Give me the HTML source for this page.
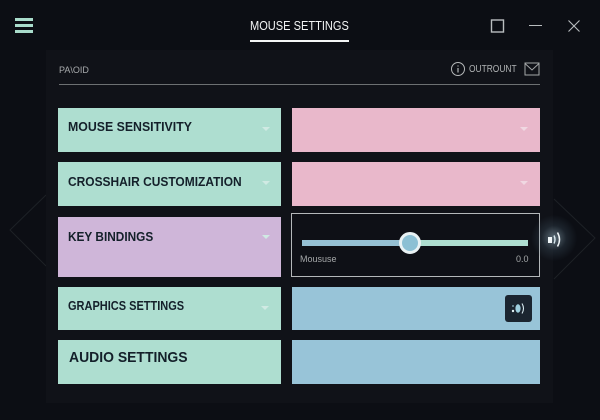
<!DOCTYPE html>
<html>
<head>
<meta charset="utf-8">
<style>
html,body{margin:0;padding:0;background:#0c0e14;}
#r{position:relative;width:600px;height:420px;overflow:hidden;background:#0c0e14;font-family:"Liberation Sans",sans-serif;}
#r div,#r svg{position:absolute;}
.t{white-space:nowrap;font-weight:bold;color:#14202a;transform-origin:0 50%;line-height:16px;}
.c{left:58px;width:223px;}
.d{left:292px;width:248px;}
.a{width:0;height:0;border-left:4px solid transparent;border-right:4px solid transparent;border-top:4px solid #d0eae3;}
</style>
</head>
<body>
<div id="r">
<svg style="left:0;top:0" width="600" height="420">
<path d="M46 195 L10 230 L46 266" fill="none" stroke="#1d2126" stroke-width="1"/>
<path d="M554 199 L595 238 L554 279" fill="none" stroke="#1d2126" stroke-width="1"/>
</svg>
<div style="left:46px;top:50px;width:507px;height:353px;background:#101218"></div>

<div style="left:15px;top:18px;width:18px;height:3px;background:#a9dccb"></div>
<div style="left:15px;top:24px;width:18px;height:3px;background:#a9dccb"></div>
<div style="left:15px;top:30px;width:18px;height:3px;background:#a9dccb"></div>

<div class="t" style="left:250px;top:18px;font-size:13px;font-weight:normal;color:#f2f4f4;transform:scaleX(.85)">MOUSE SETTINGS</div>
<div style="left:250px;top:40px;width:99px;height:2px;background:#f2f4f4"></div>

<svg style="left:490px;top:18px" width="16" height="16"><rect x="1.5" y="2" width="12" height="12" fill="none" stroke="#b9bdbf" stroke-width="1.4"/></svg>
<div style="left:529px;top:25px;width:13px;height:1px;background:#b9bdbf"></div>
<svg style="left:567px;top:19px" width="14" height="14"><path d="M1.5 1.5L12.5 12.5M12.5 1.5L1.5 12.5" stroke="#b9bdbf" stroke-width="1.1" fill="none"/></svg>

<div class="t" style="left:59px;top:62px;font-size:9px;font-weight:normal;color:#a8abad;">PA\OID</div>
<div style="left:59px;top:84px;width:481px;height:1px;background:#6d7072"></div>

<svg style="left:450px;top:61px" width="16" height="16"><circle cx="8" cy="8" r="6.5" fill="none" stroke="#b5b8b9" stroke-width="1"/><path d="M8 4.5v1M8 7v4.5" stroke="#b5b8b9" stroke-width="1.2"/></svg>
<div class="t" style="left:469px;top:62px;font-size:10px;font-weight:normal;color:#b0b3b4;transform:scaleX(.84)">OUTROUNT</div>
<svg style="left:524px;top:62px" width="17" height="14"><rect x="1" y="1" width="14" height="12" fill="none" stroke="#a5a8a9" stroke-width="1"/><path d="M1 1.5L8 8L15 1.5" fill="none" stroke="#a5a8a9" stroke-width="1"/></svg>

<div class="c" style="top:108px;height:44px;background:#aeded0"></div>
<div class="t" style="left:68px;top:119px;font-size:13px;transform:scaleX(.948)">MOUSE SENSITIVITY</div>
<div class="a" style="left:262px;top:127px"></div>

<div class="c" style="top:162px;height:44px;background:#aeded0"></div>
<div class="t" style="left:68px;top:173.5px;font-size:13px;transform:scaleX(.92)">CROSSHAIR CUSTOMIZATION</div>
<div class="a" style="left:262px;top:181px"></div>

<div class="c" style="top:217px;height:60px;background:#cfb6d9"></div>
<div class="t" style="left:68px;top:229px;font-size:13px;transform:scaleX(.91)">KEY BINDINGS</div>
<div class="a" style="left:262px;top:235px"></div>

<div class="c" style="top:287px;height:43px;background:#aeded0"></div>
<div class="t" style="left:68px;top:297.5px;font-size:12.5px;transform:scaleX(.88)">GRAPHICS SETTINGS</div>
<div class="a" style="left:261px;top:306px"></div>

<div class="c" style="top:340px;height:44px;background:#aeded0"></div>
<div class="t" style="left:69px;top:350px;font-size:15px;transform:scaleX(.93)">AUDIO SETTINGS</div>

<div class="d" style="top:108px;height:44px;background:#e9b8cb"></div>
<div class="a" style="left:520px;top:127px;border-top-color:#f0d8e2"></div>
<div class="d" style="top:162px;height:44px;background:#e9b8cb"></div>
<div class="a" style="left:520px;top:181px;border-top-color:#f0d8e2"></div>

<div style="left:291px;top:213px;width:247px;height:62px;border:1px solid #b4b8ba;background:#0e1016"></div>
<div style="left:302px;top:240px;width:107px;height:6px;background:#95c0d3"></div>
<div style="left:409px;top:240px;width:119px;height:6px;background:#aeded0"></div>
<div style="left:398.5px;top:232px;width:16px;height:16px;border:3px solid #e9f2f4;border-radius:50%;background:#8cc0d4"></div>
<div class="t" style="left:300px;top:251px;font-size:9px;font-weight:normal;color:#a5a8a9;">Moususe</div>
<div class="t" style="left:516px;top:251px;font-size:9px;font-weight:normal;color:#a5a8a9;">0.0</div>

<div class="d" style="top:287px;height:43px;background:#98c4d8"></div>
<div style="left:505px;top:295px;width:27px;height:27px;border-radius:3px;background:#1b2530"></div>
<svg style="left:510px;top:301px" width="17" height="15"><circle cx="3" cy="5" r="0.9" fill="#8fb6c4"/><circle cx="3" cy="10" r="1.2" fill="#e4f2f5"/><ellipse cx="8" cy="7.5" rx="2.6" ry="4.2" fill="#9fd0e0"/><path d="M12 2.5Q15 7.5 12 12.5" fill="none" stroke="#d6e9ef" stroke-width="1.1"/></svg>

<div class="d" style="top:340px;height:44px;background:#98c4d8"></div>

<div style="left:531px;top:215px;width:46px;height:46px;border-radius:50%;background:radial-gradient(circle,rgba(170,200,215,.5) 0%,rgba(90,120,140,.2) 38%,rgba(20,30,40,.05) 70%,rgba(20,30,40,0) 100%)"></div>
<svg style="left:546px;top:230px" width="17" height="19"><rect x="2" y="7" width="4" height="6" fill="#f0f6f8"/><path d="M8 5.5Q10 9.5 8 13.5" fill="none" stroke="#d8e8ee" stroke-width="1.4"/><path d="M11.5 2.5Q15.5 9.5 11.5 16.5" fill="none" stroke="#f0f6f8" stroke-width="1.5"/></svg>
</div>
</body>
</html>
